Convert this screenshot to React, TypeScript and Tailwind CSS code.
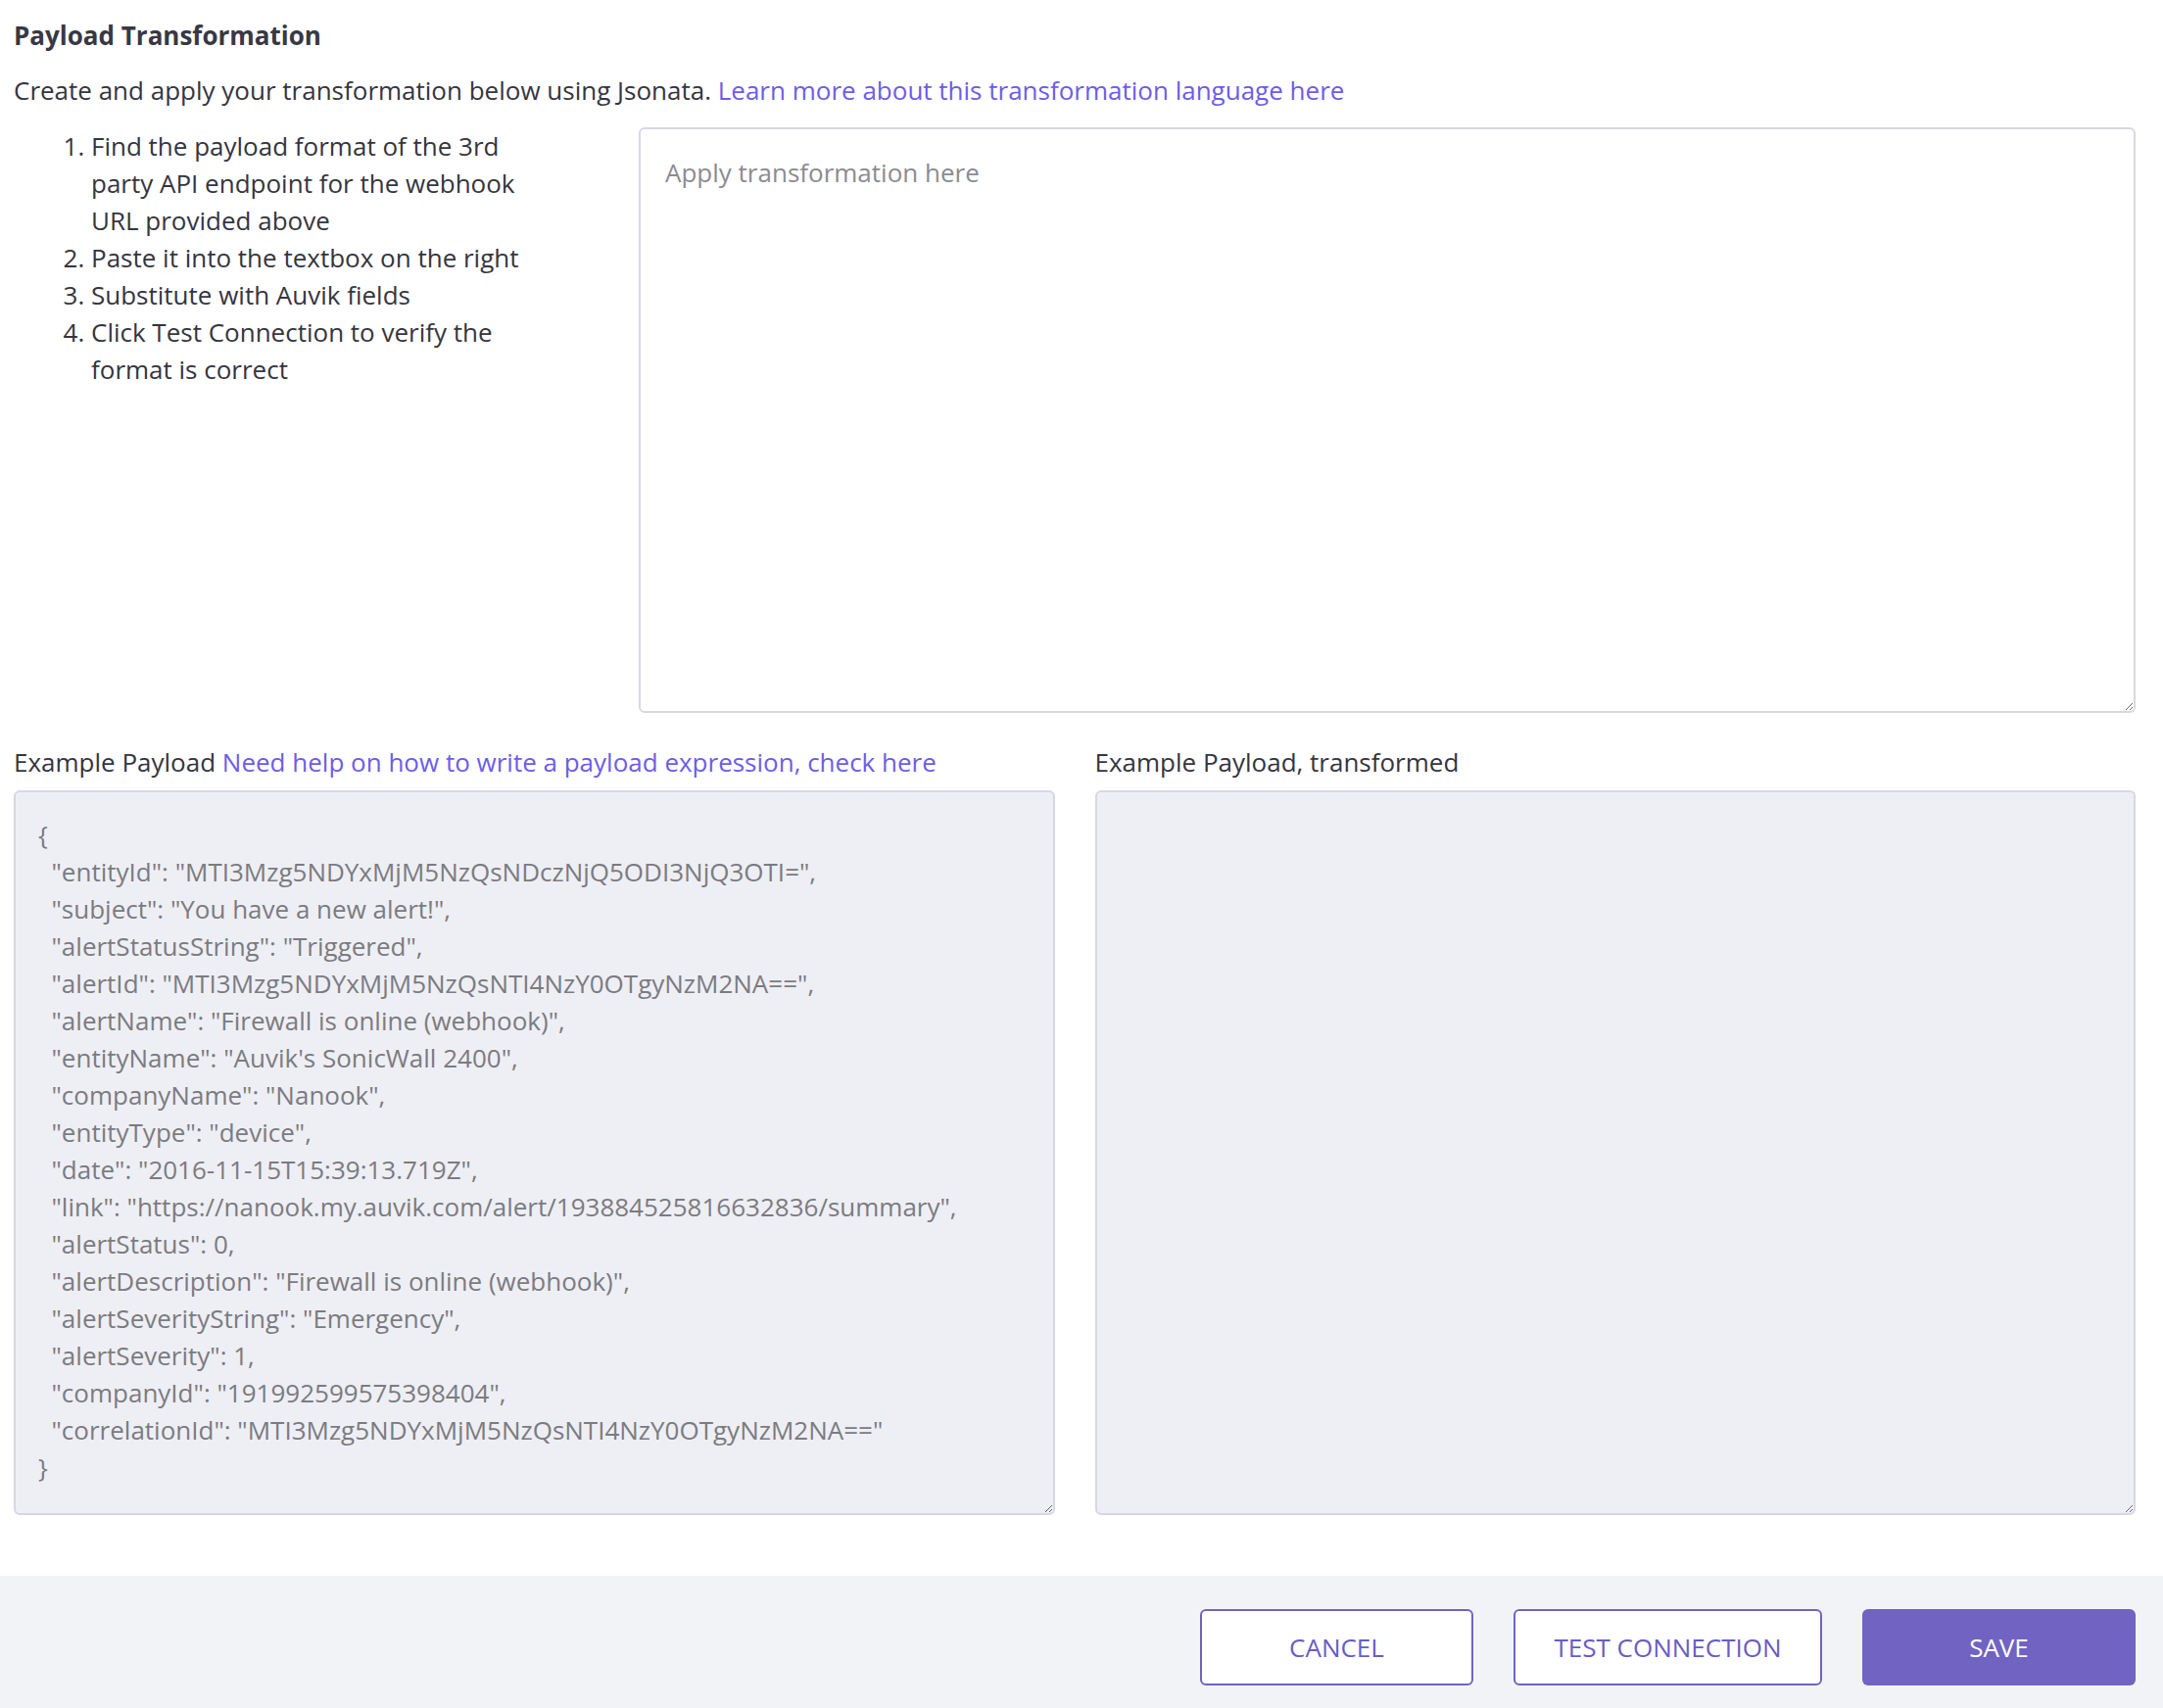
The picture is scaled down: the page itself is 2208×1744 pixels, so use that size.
import React from 'react';

const payload = `{
  "entityId": "MTI3Mzg5NDYxMjM5NzQsNDczNjQ5ODI3NjQ3OTI=",
  "subject": "You have a new alert!",
  "alertStatusString": "Triggered",
  "alertId": "MTI3Mzg5NDYxMjM5NzQsNTI4NzY0OTgyNzM2NA==",
  "alertName": "Firewall is online (webhook)",
  "entityName": "Auvik's SonicWall 2400",
  "companyName": "Nanook",
  "entityType": "device",
  "date": "2016-11-15T15:39:13.719Z",
  "link": "https://nanook.my.auvik.com/alert/193884525816632836/summary",
  "alertStatus": 0,
  "alertDescription": "Firewall is online (webhook)",
  "alertSeverityString": "Emergency",
  "alertSeverity": 1,
  "companyId": "191992599575398404",
  "correlationId": "MTI3Mzg5NDYxMjM5NzQsNTI4NzY0OTgyNzM2NA=="
}`;

const steps = [
  'Find the payload format of the 3rd party API endpoint for the webhook URL provided above',
  'Paste it into the textbox on the right',
  'Substitute with Auvik fields',
  'Click Test Connection to verify the format is correct',
];

export default function App() {
  return (
    <div className="min-h-[1744px] bg-white flex flex-col font-['Open_Sans',sans-serif] text-[26px] leading-[38px] text-[#35353f]">
      <div className="pl-[14px] pr-[28px] pt-[17px]">
        <h2 className="font-bold text-[#383843]">Payload Transformation</h2>
        <p className="mt-[18px]">
          Create and apply your transformation below using Jsonata.{' '}
          <a href="#" className="text-[#6d5ce8]">Learn more about this transformation language here</a>
        </p>

        <div className="mt-[19px] flex">
          <div className="w-[638px] flex-none">
            <ol className="w-[541px] list-decimal pl-[79px]">
              {steps.map((s, i) => (
                <li key={i}>{s}</li>
              ))}
            </ol>
          </div>
          <textarea
            placeholder="Apply transformation here"
            className="flex-1 h-[598px] rounded-md border-2 border-[#d7d7e4] bg-white px-[25px] py-[25px] text-[#35353f] placeholder:text-[#8b8b91] outline-none"
          />
        </div>

        <div className="mt-[31px] grid grid-cols-2 gap-[41px]">
          <div className="flex flex-col">
            <div className="mb-[10px]">
              Example Payload{' '}
              <a href="#" className="text-[#6d5ce8]">Need help on how to write a payload expression, check here</a>
            </div>
            <textarea
              readOnly
              defaultValue={payload}
              className="h-[740px] rounded-md border-2 border-[#d7d7e4] bg-[#eeeff4] pl-[23px] pr-[23px] pt-[24px] text-[#7b7b81] whitespace-pre outline-none"
            />
          </div>
          <div className="flex flex-col">
            <div className="mb-[10px]">Example Payload, transformed</div>
            <textarea
              readOnly
              className="h-[740px] rounded-md border-2 border-[#d7d7e4] bg-[#eeeff4] px-[23px] pt-[24px] text-[#7b7b81] outline-none"
            />
          </div>
        </div>
      </div>

      <div className="mt-[62px] flex-1 bg-[#f2f3f7] pr-[28px] pt-[34px] pb-[23px] flex justify-end gap-[41px]">
        <button className="w-[279px] h-[78px] rounded-md border-2 border-[#7063c2] bg-white text-[#6a5cc4]">
          CANCEL
        </button>
        <button className="w-[315px] h-[78px] rounded-md border-2 border-[#7063c2] bg-white text-[#6a5cc4]">
          TEST CONNECTION
        </button>
        <button className="w-[279px] h-[78px] rounded-md bg-[#7063c2] text-white">
          SAVE
        </button>
      </div>
    </div>
  );
}
